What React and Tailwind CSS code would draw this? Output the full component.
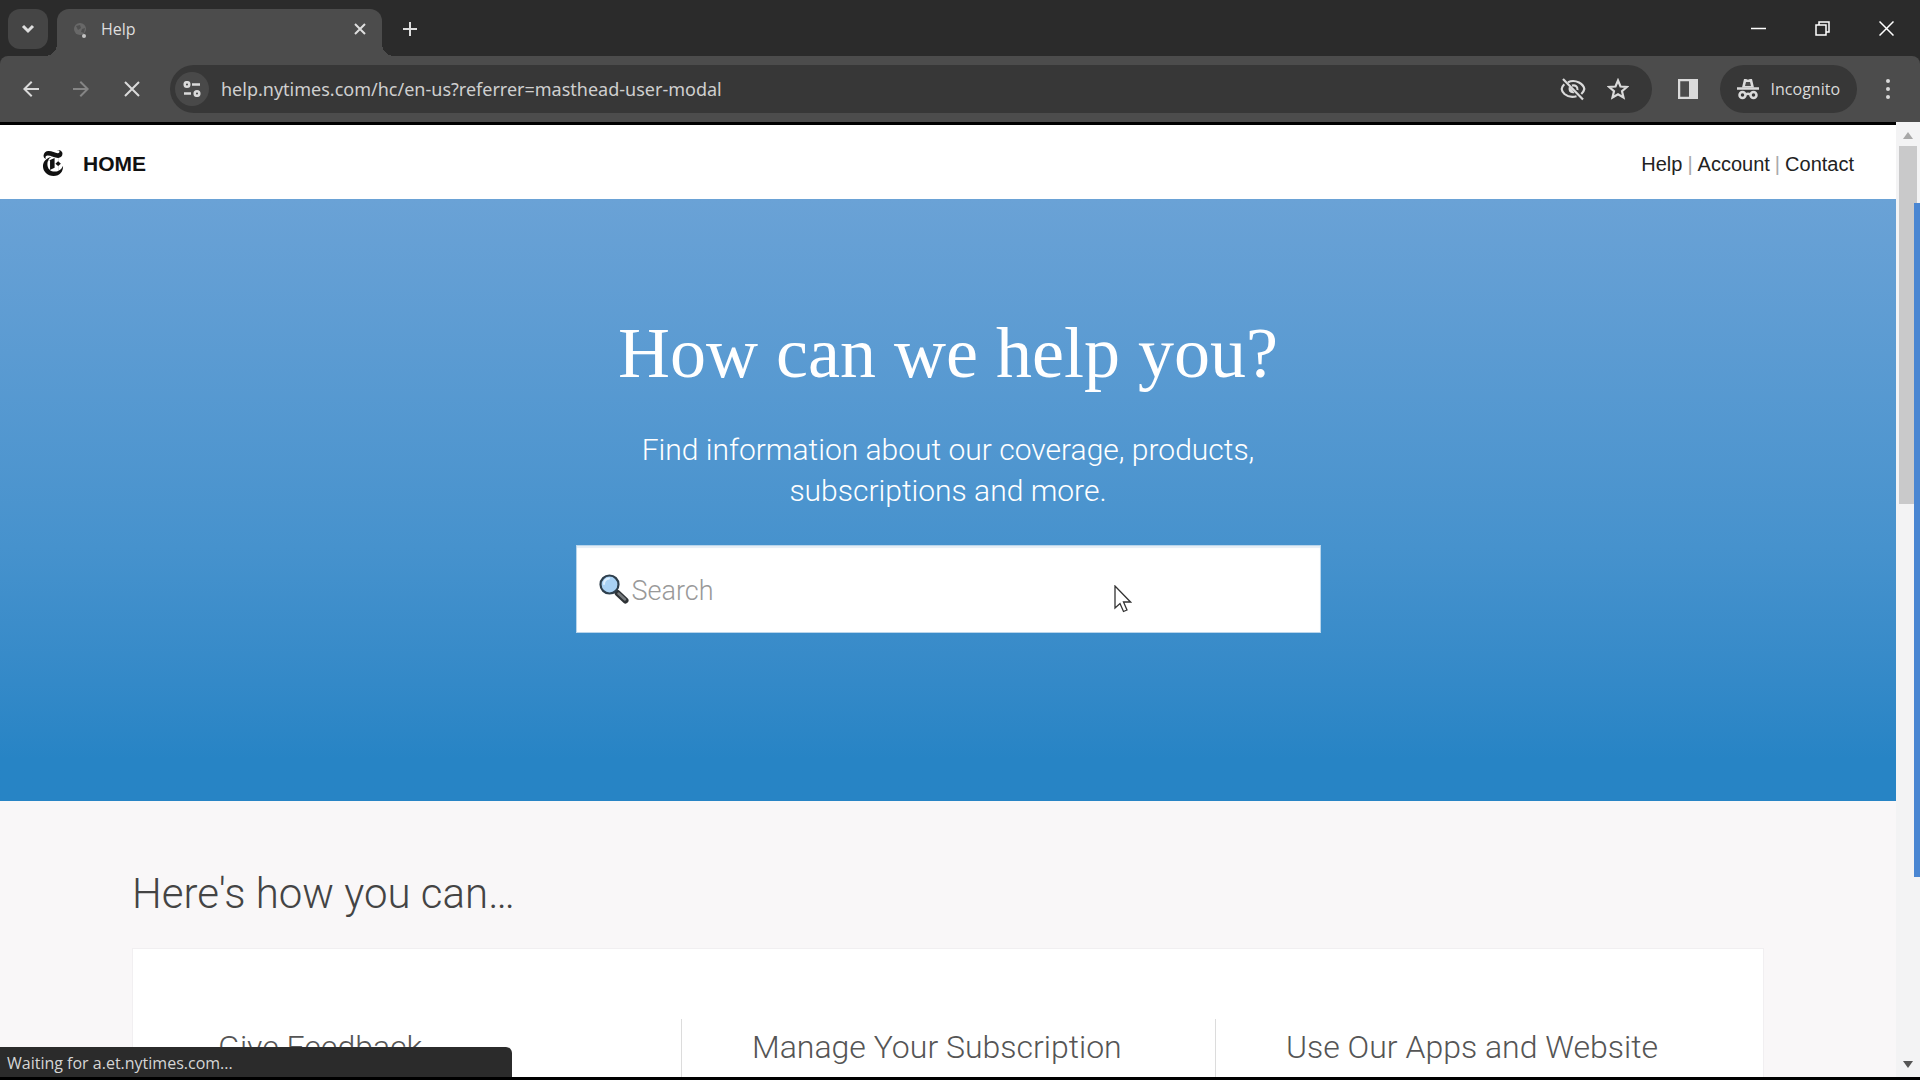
import React, { useState } from 'react';
import { MdArrowBack, MdArrowForward } from 'react-icons/md';
import { SiNewyorktimes } from 'react-icons/si';

const links = ['Help', 'Account', 'Contact'];
const topics = ['Give Feedback', 'Manage Your Subscription', 'Use Our Apps and Website'];

const TabStrip = () => (
  <div className="flex h-14 items-start bg-[#2b2b2b] pr-[2px] pl-2 text-[#dedede]">
    <button aria-label="Search tabs" className="mt-[9px] flex h-10 w-10 items-center justify-center rounded-xl bg-[#454545]">
      <svg width="14" height="10" viewBox="0 0 14 10" fill="none" stroke="currentColor" strokeWidth="3">
        <path d="M2 2l5 5 5-5" />
      </svg>
    </button>
    <div className="relative mt-[9px] ml-[9px] flex h-[47px] w-[325px] items-start rounded-t-xl bg-[#4c4c4c] pt-2 pr-[10px] pl-4">
      {/* curved feet where the tab meets the toolbar */}
      <span className="absolute bottom-0 -left-3 h-3 w-3 bg-[radial-gradient(circle_at_0_0,transparent_12px,#4c4c4c_12px)]" />
      <span className="absolute -right-3 bottom-0 h-3 w-3 bg-[radial-gradient(circle_at_100%_0,transparent_12px,#4c4c4c_12px)]" />
      <svg className="mt-1" width="15" height="18" viewBox="0 0 15 18">
        <circle cx="7" cy="8" r="6" fill="#686868" />
        <path d="M3 5l4-1 1 3-3 2zM9 8l3-1-1 5-3-1z" fill="#4f4f4f" />
        <circle cx="11" cy="15" r="2" fill="#c4c4c4" />
      </svg>
      <span className="ml-[13px] flex-1 text-base leading-6 text-[#dedede]">Help</span>
      <button aria-label="Close tab" className="flex h-6 w-6 items-center justify-center">
        <svg width="12" height="12" viewBox="0 0 12 12" stroke="currentColor" strokeWidth="2">
          <path d="M1 1l10 10M11 1L1 11" />
        </svg>
      </button>
    </div>
    <button aria-label="New tab" className="mt-[9px] ml-2 flex h-10 w-10 items-center justify-center">
      <svg width="16" height="16" viewBox="0 0 16 16" stroke="currentColor" strokeWidth="2">
        <path d="M8 1v14M1 8h14" />
      </svg>
    </button>
    <div className="ml-auto flex h-14 items-center">
      <button aria-label="Minimize" className="flex h-14 w-16 items-center justify-center">
        <svg width="15" height="15" viewBox="0 0 15 15" stroke="#fff" strokeWidth="1.5">
          <path d="M0 7.5h15" />
        </svg>
      </button>
      <button aria-label="Restore" className="flex h-14 w-16 items-center justify-center">
        <svg width="15" height="15" viewBox="0 0 15 15" fill="none" stroke="#fff" strokeWidth="1.5">
          <path d="M1 4h10v10H1zM4 4V1h10v10h-3" />
        </svg>
      </button>
      <button aria-label="Close" className="flex h-14 w-16 items-center justify-center">
        <svg width="15" height="15" viewBox="0 0 15 15" stroke="#fff" strokeWidth="1.5">
          <path d="M0.5 0.5l14 14M14.5 0.5l-14 14" />
        </svg>
      </button>
    </div>
  </div>
);

const Toolbar = () => {
  const [url, setUrl] = useState('help.nytimes.com/hc/en-us?referrer=masthead-user-modal');

  return (
    <div className="bg-[#2b2b2b]">
      <div className="flex h-[66px] items-center rounded-t-lg bg-[#4c4c4c] pr-4 pl-[11px] text-[#dadada]">
        <button aria-label="Back" className="flex h-10 w-10 items-center justify-center">
          <MdArrowBack size={24} />
        </button>
        <button aria-label="Forward" className="ml-[10px] flex h-10 w-10 items-center justify-center text-[#858585]">
          <MdArrowForward size={24} />
        </button>
        <button aria-label="Stop loading" className="ml-[11px] flex h-10 w-10 items-center justify-center">
          <svg width="16" height="16" viewBox="0 0 16 16" stroke="currentColor" strokeWidth="2">
            <path d="M1 1l14 14M15 1L1 15" />
          </svg>
        </button>
        <div className="ml-[18px] flex h-12 flex-1 items-center rounded-full bg-[#373737] pr-[18px] pl-[5px]">
          <button aria-label="View site information" className="flex h-[34px] w-[34px] items-center justify-center rounded-full bg-[#494949]">
            <svg width="18" height="16" viewBox="0 0 18 16" fill="none" stroke="currentColor" strokeWidth="2.5">
              <circle cx="4" cy="3.5" r="2.3" />
              <path d="M9 3.5h8M1 12.5h7" />
              <circle cx="14" cy="12.5" r="2.3" />
            </svg>
          </button>
          <input
            aria-label="Address"
            className="ml-3 min-w-0 flex-1 bg-transparent font-['Noto_Sans',sans-serif] text-lg leading-6 text-[#cfcfcf] outline-none"
            value={url}
            onChange={(e) => setUrl(e.target.value)}
          />
          <button aria-label="Third-party cookies blocked" className="flex h-8 w-8 items-center justify-center">
            <svg width="26" height="24" viewBox="0 0 26 24" fill="none" stroke="currentColor" strokeWidth="2.2">
              <path d="M8 5.200C11 3.800 15.500 3.700 19 5.500 22 7.200 24 9.500 24.300 12 24 13.800 23 15.500 21.300 17M16.500 19.200C12 20.500 7.500 19.500 4.500 17 2.800 15.500 1.800 13.800 1.700 12 1.900 10.200 2.800 8.700 4.300 7.300" />
              <path d="M12 8.600C15 7.500 18 9.500 17.500 13" />
              <path d="M9 9.500C7.500 13.500 10 17 14.500 16L12 12.500z" fill="currentColor" stroke="none" />
              <path d="M3 2l20 20.500" />
            </svg>
          </button>
          <button aria-label="Bookmark this tab" className="ml-[13px] flex h-8 w-8 items-center justify-center">
            <svg width="22" height="22" viewBox="0 0 22 22" fill="none" stroke="currentColor" strokeWidth="2.2">
              <path d="M11 2.500l2.500 6 6.300.5-4.800 4.200 1.500 6.300L11 16.200l-5.500 3.300L7 13.200 2.200 9l6.300-.5z" />
            </svg>
          </button>
        </div>
        <button aria-label="Side panel" className="ml-5 flex h-8 w-8 items-center justify-center">
          <svg width="20" height="20" viewBox="0 0 20 20">
            <rect x="1" y="1" width="18" height="18" fill="none" stroke="currentColor" strokeWidth="2.5" />
            <path d="M11 1h8v18h-8z" fill="currentColor" />
          </svg>
        </button>
        <button className="ml-4 flex h-12 items-center rounded-full bg-[#373737] px-[17px]">
          <svg width="22" height="22" viewBox="0 0 22 22" fill="none" stroke="currentColor" strokeWidth="2.5">
            <path d="M7 1h2l2 .8 2-.8h2l2 8.500H5z" fill="currentColor" stroke="none" />
            <path d="M9 4h4l1 4H8z" fill="#4c4c4c" stroke="none" />
            <path d="M0 10.500h22" />
            <circle cx="5.500" cy="17" r="3" />
            <circle cx="16.500" cy="17" r="3" />
            <path d="M8.500 16.500q2.500-1.500 5 0" />
          </svg>
          <span className="ml-3 text-base leading-6">Incognito</span>
        </button>
        <button aria-label="Menu" className="ml-[15px] flex h-8 w-8 items-center justify-center">
          <svg width="6" height="22" viewBox="0 0 6 22" fill="currentColor">
            <circle cx="3" cy="3" r="2" />
            <circle cx="3" cy="11" r="2" />
            <circle cx="3" cy="19" r="2" />
          </svg>
        </button>
      </div>
    </div>
  );
};

const SearchBox = () => {
  const [query, setQuery] = useState('');

  return (
    <div className="relative mt-[34px] w-[745px]">
      <label className="flex h-[88px] items-center border border-[#b9d5eb] bg-white pt-1 pl-[22px] shadow-[inset_0_2px_1px_#e6eef5]">
        <svg className="mb-1" width="30" height="30" viewBox="0 0 30 30">
          <path d="M18.500 19l8 7.500" stroke="#2e3235" strokeWidth="6" strokeLinecap="round" />
          <path d="M19.500 19.500l6.500 6" stroke="#777b7e" strokeWidth="2.500" strokeLinecap="round" />
          <circle cx="10.500" cy="10.500" r="9" fill="#a9d2f5" stroke="#2e3f4d" strokeWidth="2.200" />
          <path d="M5 10c0-3 2-5 5-5.500" stroke="#dcefff" strokeWidth="2" fill="none" strokeLinecap="round" />
        </svg>
        <input
          aria-label="Search"
          className="ml-[3px] min-w-0 flex-1 bg-transparent font-[Roboto] text-[27px] leading-9 font-light text-[#333] outline-none placeholder:text-[#999]"
          placeholder="Search"
          value={query}
          onChange={(e) => setQuery(e.target.value)}
        />
      </label>
      {/* mouse pointer */}
      <svg className="pointer-events-none absolute top-10 left-[538px]" width="18" height="28" viewBox="0 0 18 28">
        <path d="M1 1v22l5-4.500 3.500 8 3.500-1.500-3.500-8h7z" fill="#fff" stroke="#333" strokeWidth="1.300" />
      </svg>
    </div>
  );
};

const Scrollbar = () => (
  <div className="relative flex w-6 flex-col items-center bg-[#f3f3f4]">
    <svg className="mt-[10px]" width="10" height="7" viewBox="0 0 10 7" fill="#a8a8a8">
      <path d="M5 0l5 7H0z" />
    </svg>
    <div className="mt-[7px] h-[358px] w-[18px] bg-[#c9c9ca]" />
    <svg className="mt-auto mb-[9px]" width="10" height="7" viewBox="0 0 10 7" fill="#555">
      <path d="M0 0h10L5 7z" />
    </svg>
    {/* window behind shows through on the edge */}
    <div className="absolute top-[81px] right-0 h-[674px] w-[6px] bg-[#4a86d2]" />
  </div>
);

const App = () => {
  return (
    <div className="flex h-screen flex-col overflow-hidden border-b-[3px] border-black font-['Open_Sans',sans-serif]">
      <TabStrip />
      <Toolbar />
      <div className="flex min-h-0 flex-1">
        <div className="relative flex min-w-0 flex-1 flex-col overflow-hidden border-t-[3px] border-black bg-[#f9f7f8]">
          <header className="flex h-[74px] shrink-0 items-center bg-white pt-1 pr-[42px] pl-10 font-['Liberation_Sans',sans-serif]">
            <a href="#" className="flex items-center text-[21px] leading-6 font-bold text-[#111]">
              <SiNewyorktimes size={26} className="mb-[2px]" />
              <span className="ml-[17px]">HOME</span>
            </a>
            <nav className="ml-auto flex items-center text-xl text-[#222]">
              {links.map((link, i) => (
                <React.Fragment key={link}>
                  {i > 0 && <span className="mx-[5px] text-[#aaa]">|</span>}
                  <a href="#">{link}</a>
                </React.Fragment>
              ))}
            </nav>
          </header>

          <section className="flex shrink-0 flex-col items-center bg-linear-to-b from-[#6aa2d6] via-[#4692cd] via-58% to-[#2784c5] to-93% pt-[114px] pb-[168px] text-white">
            <h1 className="font-['Liberation_Serif',serif] text-7xl leading-[80px]">How can we help you?</h1>
            <p className="mt-9 text-center font-[Roboto] text-[30px] leading-[41px] font-light">
              Find information about our coverage, products,
              <br />
              subscriptions and more.
            </p>
            <SearchBox />
          </section>

          <section className="shrink-0 px-[132px] pt-[69px] font-[Roboto] font-light text-[#444]">
            <h2 className="text-[42px] leading-[48px]">Here's how you can…</h2>
            <div className="mt-[30px] grid grid-cols-3 border border-[#f1eff1] bg-white px-[14px] pt-[70px] pb-10">
              {topics.map((topic) => (
                <div key={topic} className="h-[180px] border-l border-[#dcdcdc] pt-2 pl-[70px] first:border-transparent">
                  <h3 className="text-[32px] leading-10 text-[#555]">{topic}</h3>
                </div>
              ))}
            </div>
          </section>

          {/* load status bubble */}
          <div className="absolute bottom-0 left-0 h-[30px] w-[512px] rounded-tr-md bg-[#2b2b2b] pl-[7px] text-base leading-8 text-[#d5d5d5]">
            Waiting for a.et.nytimes.com...
          </div>
        </div>
        <Scrollbar />
      </div>
    </div>
  );
};

export default App;
